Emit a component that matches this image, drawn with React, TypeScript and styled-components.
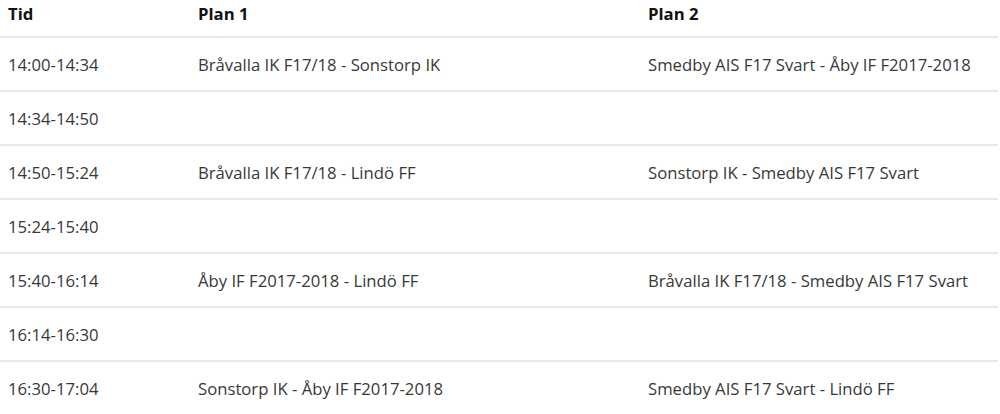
import React from "react";
import styled, { createGlobalStyle } from "styled-components";

const Global = createGlobalStyle`
  html, body { margin: 0; padding: 0; background: #ffffff; }
  body { font-family: "Open Sans", "Noto Sans", sans-serif; }
`;

const Table = styled.table`
  width: 998px;
  border-collapse: collapse;
  table-layout: fixed;
  font-size: 16.7px;
  color: #383838;
`;

const HeadCell = styled.th<{ $w: number }>`
  width: ${(p) => p.$w}px;
  text-align: left;
  font-weight: 700;
  color: #111;
  height: 37px;
  padding: 0 8px 10px;
  box-sizing: border-box;
  border-bottom: 2px solid #e8e8e8;
`;

const Row = styled.tr`
  border-bottom: 2px solid #e8e8e8;
  &:last-child { border-bottom: none; }
`;

const Cell = styled.td`
  height: 54px;
  padding: 0 8px;
  box-sizing: border-box;
  white-space: nowrap;
`;

const rows: [string, string, string][] = [
  ["14:00-14:34", "Bråvalla IK F17/18 - Sonstorp IK", "Smedby AIS F17 Svart - Åby IF F2017-2018"],
  ["14:34-14:50", "", ""],
  ["14:50-15:24", "Bråvalla IK F17/18 - Lindö FF", "Sonstorp IK - Smedby AIS F17 Svart"],
  ["15:24-15:40", "", ""],
  ["15:40-16:14", "Åby IF F2017-2018 - Lindö FF", "Bråvalla IK F17/18 - Smedby AIS F17 Svart"],
  ["16:14-16:30", "", ""],
  ["16:30-17:04", "Sonstorp IK - Åby IF F2017-2018", "Smedby AIS F17 Svart - Lindö FF"],
];

export default function App() {
  return (
    <>
      <Global />
      <Table>
        <thead>
          <tr>
            <HeadCell $w={190}>Tid</HeadCell>
            <HeadCell $w={450}>Plan 1</HeadCell>
            <HeadCell $w={358}>Plan 2</HeadCell>
          </tr>
        </thead>
        <tbody>
          {rows.map((r) => (
            <Row key={r[0]}>
              <Cell>{r[0]}</Cell>
              <Cell>{r[1]}</Cell>
              <Cell>{r[2]}</Cell>
            </Row>
          ))}
        </tbody>
      </Table>
    </>
  );
}
